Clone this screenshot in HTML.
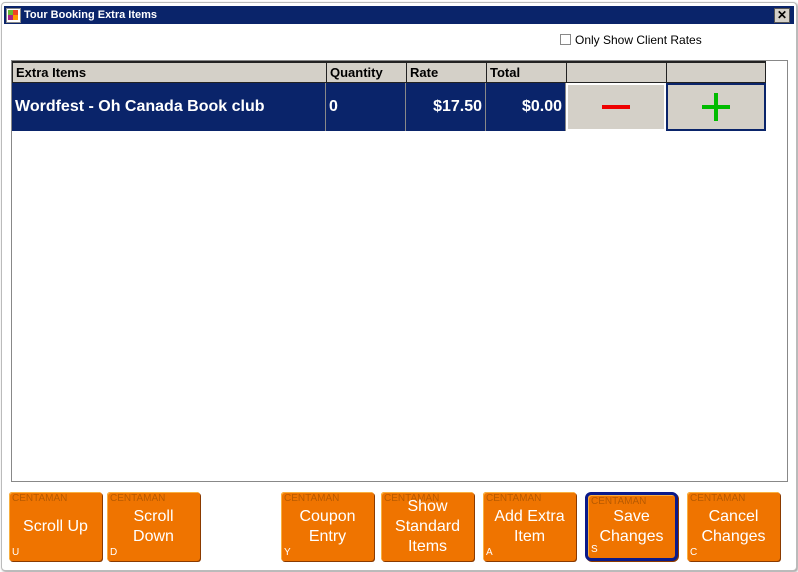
<!DOCTYPE html>
<html><head><style>
body{margin:0;width:798px;height:572px;background:#fff;font-family:"Liberation Sans",Arial,sans-serif;position:relative;overflow:hidden}
.win{position:absolute;left:1px;top:2px;width:794px;height:567px;border:1px solid #bbb;border-radius:4px;background:#fff;box-shadow:1px 1px 2px #999}
.title{position:absolute;left:4px;top:6px;width:790px;height:18px;background:#0a246a;color:#fff;font-size:11px;font-weight:bold;line-height:18px}
.title span{position:absolute;left:20px}
.ico{position:absolute;left:2px;top:2px;width:13px;height:13px;background:#fff;border:1px solid #888;overflow:hidden}
.ico b{position:absolute;width:5px;height:5px}
.close{position:absolute;right:4px;top:2px;width:14px;height:13px;background:#d4d0c8;border:1px solid #555;color:#000;font-size:12px;line-height:12px;text-align:center}
.chk{position:absolute;left:560px;top:33px;font-size:12px;color:#000}
.chk i{display:inline-block;width:9px;height:9px;border:1px solid #888;vertical-align:-1px;margin-right:4px}
.grid{position:absolute;left:11px;top:60px;width:775px;height:420px;border:1px solid #888}
.c{position:absolute;box-sizing:border-box;font-size:13px}
.h{top:0;height:22px;background:#d4d0c8;border:1px solid #222;border-top:2px solid #222;font-weight:bold;line-height:20px;padding-left:3px;margin-left:-1px}
.r{top:22px;height:48px;background:#0a246a;color:#fff;font-weight:bold;font-size:16px;line-height:48px;border-right:1px solid #888;padding:0 3px}
.btn{position:absolute;top:492px;width:93px;height:69px;background:#ef7400;border-radius:3px;box-shadow:inset 1px 1px 0 #f9b040,1px 1px 0 #8a3a00;color:#fff;text-align:center;font-size:16px;line-height:20px;box-sizing:border-box}
.btn .cm{position:absolute;left:3px;top:2px;font-size:10px;color:#b85a00;line-height:10px}
.btn .k{position:absolute;left:3px;bottom:3px;font-size:10px;line-height:10px}
.btn .t{position:absolute;left:0;right:0;top:50%;transform:translateY(-50%)}
</style></head><body>
<div class="win"></div>
<div class="title"><div class="ico"><b style="left:1px;top:1px;background:#6b3"></b><b style="left:6px;top:1px;background:#e42"></b><b style="left:1px;top:6px;background:#a28"></b><b style="left:6px;top:6px;background:#f90"></b></div><span>Tour Booking Extra Items</span><div class="close">✕</div></div>
<div class="chk"><i></i>Only Show Client Rates</div>
<div class="grid">
<div class="c h" style="left:1px;width:315px">Extra Items</div>
<div class="c h" style="left:315px;width:81px">Quantity</div>
<div class="c h" style="left:395px;width:81px">Rate</div>
<div class="c h" style="left:475px;width:81px">Total</div>
<div class="c h" style="left:555px;width:101px"></div>
<div class="c h" style="left:655px;width:100px"></div>
<div class="c r" style="left:0;width:314px">Wordfest - Oh Canada Book club</div>
<div class="c r" style="left:314px;width:80px">0</div>
<div class="c r" style="left:394px;width:80px;text-align:right">$17.50</div>
<div class="c r" style="left:474px;width:80px;text-align:right">$0.00</div>
<div class="c" style="left:554px;top:22px;width:100px;height:48px;background:#d4d0c8;border:2px solid #fff"><div style="position:absolute;left:34px;top:20px;width:28px;height:4px;background:#e00"></div></div>
<div class="c" style="left:654px;top:22px;width:100px;height:48px;background:#d4d0c8;border:2px solid #0a246a"><div style="position:absolute;left:34px;top:20px;width:28px;height:4px;background:#0b0"></div><div style="position:absolute;left:46px;top:8px;width:4px;height:28px;background:#0b0"></div></div>
</div>
<div class="btn" style="left:9px"><div class="cm">CENTAMAN</div><div class="t">Scroll Up</div><div class="k">U</div></div>
<div class="btn" style="left:107px"><div class="cm">CENTAMAN</div><div class="t">Scroll<br>Down</div><div class="k">D</div></div>
<div class="btn" style="left:281px"><div class="cm">CENTAMAN</div><div class="t">Coupon<br>Entry</div><div class="k">Y</div></div>
<div class="btn" style="left:381px"><div class="cm">CENTAMAN</div><div class="t">Show<br>Standard<br>Items</div></div>
<div class="btn" style="left:483px"><div class="cm">CENTAMAN</div><div class="t">Add Extra<br>Item</div><div class="k">A</div></div>
<div class="btn" style="left:585px;border:3px solid #0a1a8a;border-radius:6px"><div class="cm">CENTAMAN</div><div class="t">Save<br>Changes</div><div class="k">S</div></div>
<div class="btn" style="left:687px"><div class="cm">CENTAMAN</div><div class="t">Cancel<br>Changes</div><div class="k">C</div></div>
</body></html>
